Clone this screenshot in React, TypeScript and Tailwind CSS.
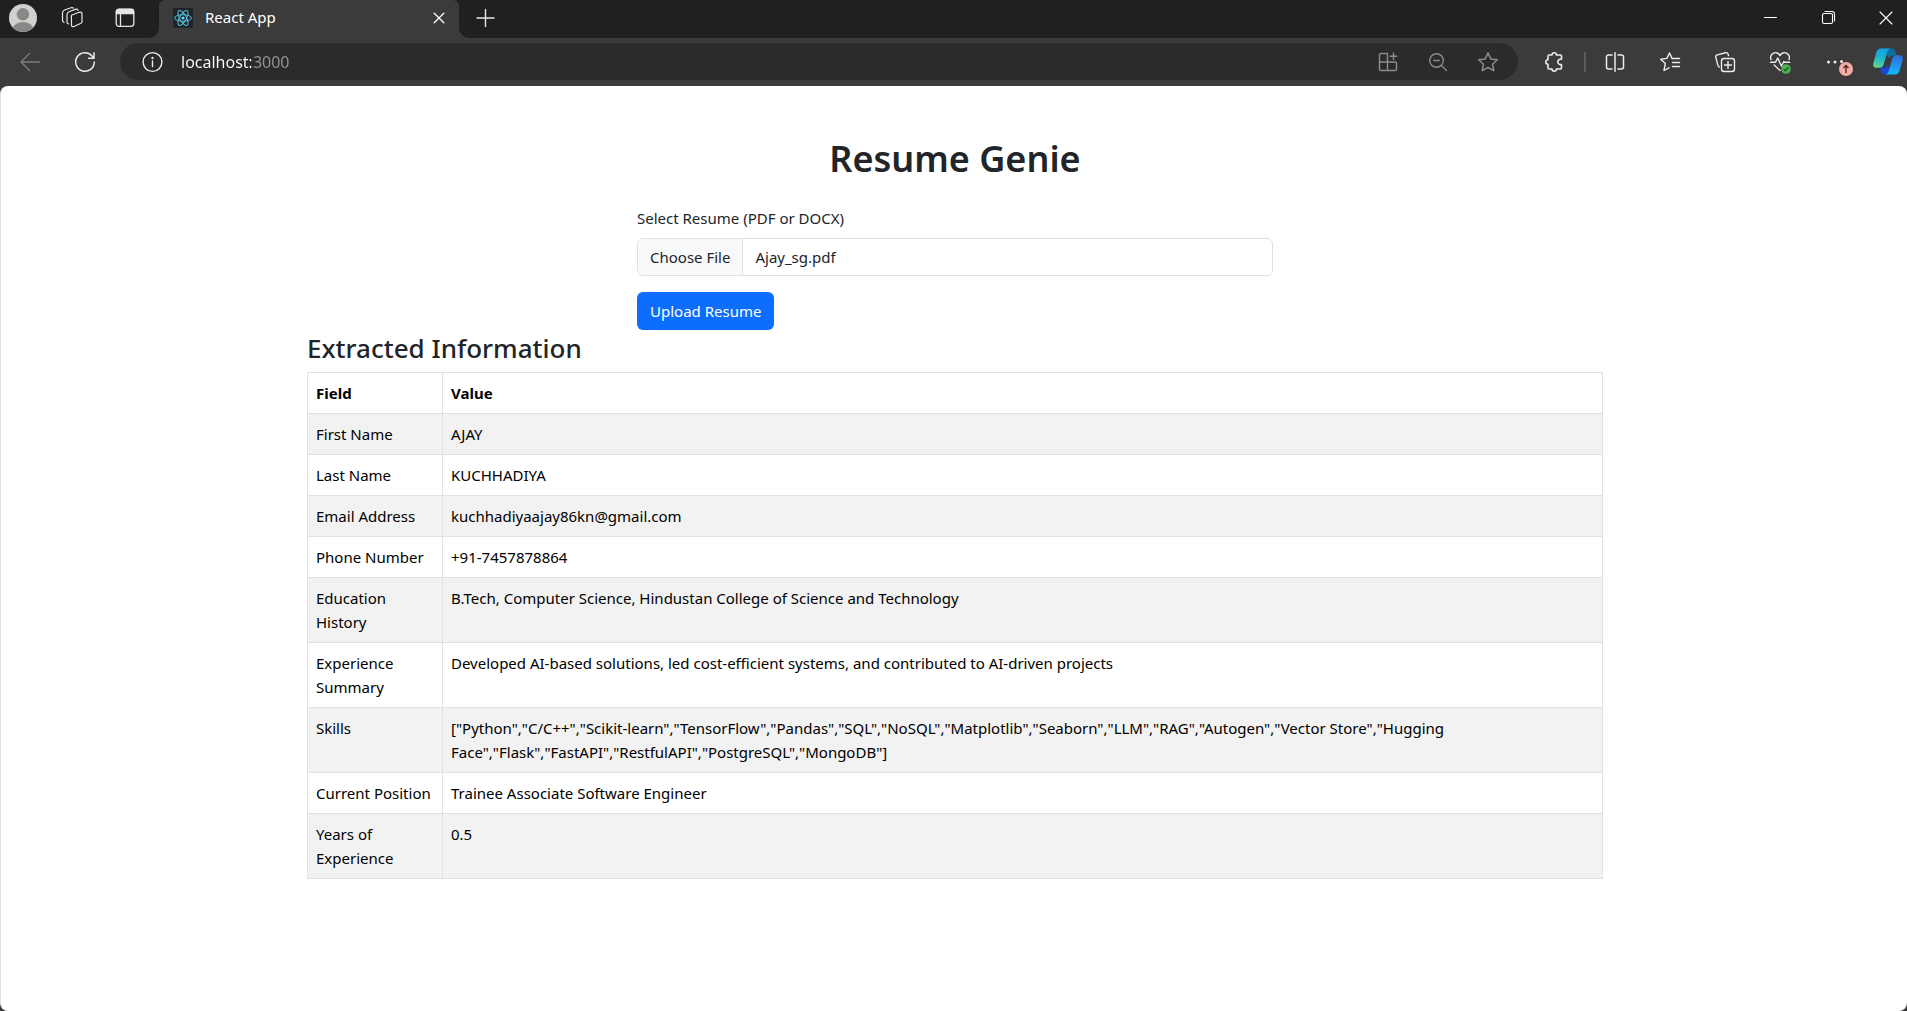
import React, { useState } from "react";

const rows: [string, string][] = [
  ["First Name", "AJAY"],
  ["Last Name", "KUCHHADIYA"],
  ["Email Address", "kuchhadiyaajay86kn@gmail.com"],
  ["Phone Number", "+91-7457878864"],
  ["Education History", "B.Tech, Computer Science, Hindustan College of Science and Technology"],
  ["Experience Summary", "Developed AI-based solutions, led cost-efficient systems, and contributed to AI-driven projects"],
  [
    "Skills",
    '["Python","C/C++","Scikit-learn","TensorFlow","Pandas","SQL","NoSQL","Matplotlib","Seaborn","LLM","RAG","Autogen","Vector Store","Hugging Face","Flask","FastAPI","RestfulAPI","PostgreSQL","MongoDB"]',
  ],
  ["Current Position", "Trainee Associate Software Engineer"],
  ["Years of Experience", "0.5"],
];

function Icon({ children, width = 1.3 }: { children: React.ReactNode; width?: number }) {
  return (
    <svg
      viewBox="0 0 20 20"
      className="block size-5 overflow-visible"
      fill="none"
      stroke="currentColor"
      strokeWidth={width}
      strokeLinecap="round"
      strokeLinejoin="round"
      aria-hidden="true"
    >
      {children}
    </svg>
  );
}

function IconButton({ label, className = "", children }: { label: string; className?: string; children: React.ReactNode }) {
  return (
    <button type="button" aria-label={label} className={`shrink-0 ${className}`}>
      {children}
    </button>
  );
}

function Avatar() {
  return (
    <svg viewBox="0 0 28 28" className="block size-7" aria-hidden="true">
      <clipPath id="avatar-clip">
        <circle cx="14" cy="14" r="14" />
      </clipPath>
      <g clipPath="url(#avatar-clip)">
        <rect width="28" height="28" fill="#d2d0ce" />
        <circle cx="14" cy="10.3" r="6.2" fill="#8a8886" />
        <ellipse cx="14" cy="26" rx="10.5" ry="8" fill="#8a8886" />
      </g>
    </svg>
  );
}

function ReactLogo() {
  return (
    <svg viewBox="0 0 20 20" className="block size-5" fill="none" stroke="#53c1de" strokeWidth="1" aria-hidden="true">
      <rect width="20" height="20" rx="2" fill="#20232a" stroke="none" />
      <ellipse cx="10" cy="10" rx="8.4" ry="3.3" />
      <ellipse cx="10" cy="10" rx="8.4" ry="3.3" transform="rotate(60 10 10)" />
      <ellipse cx="10" cy="10" rx="8.4" ry="3.3" transform="rotate(120 10 10)" />
      <circle cx="10" cy="10" r="1.6" fill="#61dafb" stroke="none" />
    </svg>
  );
}

function Copilot() {
  return (
    <svg viewBox="0 0 30 27" className="block h-[27px] w-[30px]" aria-hidden="true">
      <defs>
        <linearGradient id="cp-left" x1="0.6" y1="0" x2="0.3" y2="1">
          <stop offset="0" stopColor="#139fe2" />
          <stop offset="0.5" stopColor="#1fb4cf" />
          <stop offset="1" stopColor="#5fd98c" />
        </linearGradient>
        <linearGradient id="cp-right" x1="0.5" y1="0" x2="0.4" y2="1">
          <stop offset="0" stopColor="#2a6fe0" />
          <stop offset="0.5" stopColor="#2590ee" />
          <stop offset="1" stopColor="#14b8f5" />
        </linearGradient>
      </defs>
      <path d="M9 0.5h10c2.2 0 3 1.6 3.7 4l1 3h-4.2c-2 0-2.7 1-3.3 3z" fill="#0f6f9f" />
      <path d="M20.5 26.5h-9c-2.2 0-3-1.5-3.6-3.500l-1-3.2h3.6c2 0 3-.8 3.5-2.8z" fill="#1c46d8" />
      <path d="M8.5 0.5H17c-1.9 1-2.6 3-3.2 5l-3 10.5c-.8 2.6-2 3.8-4.5 3.8H3.5C.8 19.8-.3 18 .4 15L3.3 4.500C4.100 1.800 5.500.5 8.500.5Z" fill="url(#cp-left)" />
      <path d="M21.5 26.5H13c1.9-1 2.6-3 3.2-5l3-10.5c.8-2.6 2-3.8 4.500-3.8h2.8c2.700 0 3.800 1.800 3.100 4.800l-2.900 10.500c-.8 2.700-2.200 4-5.200 4Z" fill="url(#cp-right)" />
    </svg>
  );
}

function TabStrip() {
  return (
    <div className="flex h-[38px] items-center bg-[#202020] text-[#e6e6e6]">
      <div className="flex w-[149px] shrink-0 items-center pb-0.5 pl-[9px]">
        <IconButton label="Profile">
          <Avatar />
        </IconButton>
        <IconButton label="Workspaces" className="ml-[25px]">
          <Icon width={1.2}>
            <path d="M9.4 7.2 17 4.300Q20 3.600 20 6v7.500Q20 15 18.500 15.500l-6.500 3q-2.500.8-2.500-1.500Z" />
            <path d="M16 2.200Q15.500.8 13.500 1.400L7.500 3.500Q5 4.500 5 6.500V14q0 1.800 1.700 2" />
            <path d="M11.500.2Q10.500-.8 9-.3L2.500 2Q.5 3 .5 5v7.500q0 1.500 1.500 1.800" />
          </Icon>
        </IconButton>
        <IconButton label="Tab actions" className="ml-[33px]">
          <Icon>
            <rect x="1.2" y="1.2" width="17.6" height="17.2" rx="2.8" />
            <path d="M1.5 5.5V4a2.5 2.5 0 0 1 2.5-2.500h12A2.500 2.500 0 0 1 18.500 4v1.500Z" fill="currentColor" />
            <path d="M5.5 5.5v12.700" />
          </Icon>
        </IconButton>
      </div>
      <span className="size-2.5 shrink-0 self-end bg-[#3b3b3b]">
        <span className="block size-2.5 rounded-br-[10px] bg-[#202020]" />
      </span>
      <div className="flex h-full w-[300px] shrink-0 items-center rounded-t-md bg-[#3b3b3b] pr-2.5 pb-0.5 pl-3.5 text-white">
        <ReactLogo />
        <span className="ml-3 flex-1 pb-0.5 text-[15px] leading-5">React App</span>
        <IconButton label="Close tab">
          <Icon>
            <path d="m5.200 5.200 9.600 9.600M14.800 5.200l-9.600 9.600" />
          </Icon>
        </IconButton>
      </div>
      <span className="size-2.5 shrink-0 self-end bg-[#3b3b3b]">
        <span className="block size-2.5 rounded-bl-[10px] bg-[#202020]" />
      </span>
      <IconButton label="New tab" className="ml-1.5 pb-0.5">
        <Icon width={1.4}>
          <path d="M10.500 1.500v17M2 10h17" />
        </Icon>
      </IconButton>
      <div className="ml-auto flex gap-[38px] pr-[11px] pb-0.5 text-white">
        <IconButton label="Minimize">
          <Icon width={1}>
            <path d="M4.500 9.500h12" />
          </Icon>
        </IconButton>
        <IconButton label="Restore">
          <Icon width={1.1}>
            <rect x="4.500" y="5.500" width="10" height="10" rx="1.500" />
            <path d="M7 3.500h7a2.500 2.500 0 0 1 2.500 2.500v7" />
          </Icon>
        </IconButton>
        <IconButton label="Close window">
          <Icon width={1.1}>
            <path d="m4 4 12 12M16 4 4 16" />
          </Icon>
        </IconButton>
      </div>
    </div>
  );
}

function Toolbar() {
  return (
    <div className="flex h-12 items-center bg-[#3b3b3b] pr-1 pb-px pl-5 text-[#ececec]">
      <IconButton label="Back" className="text-[#7d7d7d]">
        <Icon>
          <path d="M19.500 10H1M9.500 1.500 1 10l8.500 8.500" />
        </Icon>
      </IconButton>
      <IconButton label="Refresh" className="ml-[35px]">
        <Icon width={1.5}>
          <path d="M19.300 10A9.300 9.300 0 1 1 17 3.900L18.800 6M19 .8V6.200H13.500" />
        </Icon>
      </IconButton>
      <div className="ml-[25px] flex h-[37px] flex-1 items-center rounded-full bg-[#2b2b2b] pr-5 pl-[22px]">
        <IconButton label="Site information">
          <Icon width={1.4}>
            <circle cx="10.500" cy="10" r="9.400" />
            <path d="M10.500 9v5.500" />
            <circle cx="10.500" cy="6" r=".5" fill="currentColor" />
          </Icon>
        </IconButton>
        <input
          aria-label="Address"
          defaultValue="localhost:3000"
          className="ml-[19px] min-w-0 flex-1 bg-[linear-gradient(90deg,#ffffff_70px,#949494_70px)] bg-clip-text text-base text-transparent outline-none"
        />
        <div className="flex gap-[30px] text-[#8c8c8c]">
          <IconButton label="Install app">
            <Icon width={1.4}>
              <path d="M9.500 1.500H3A1.500 1.500 0 0 0 1.500 3v14A1.500 1.500 0 0 0 3 18.500h14a1.500 1.500 0 0 0 1.500-1.500v-5.500A1.500 1.500 0 0 0 17 10H1.500M9.500 1.500v17M15.500 1v6.500M12.200 4.200h6.600" />
            </Icon>
          </IconButton>
          <IconButton label="Zoom">
            <Icon width={1.4}>
              <circle cx="8.500" cy="8.500" r="6.800" />
              <path d="m13.500 13.500 5 5M5.800 8.500h5.400" />
            </Icon>
          </IconButton>
          <IconButton label="Favorite this page">
            <Icon width={1.5}>
              <path d="m10 .9 2.800 6 6.500.8-4.800 4.500 1.300 6.500-5.800-3.200-5.800 3.200 1.300-6.500L.7 7.700l6.500-.8Z" />
            </Icon>
          </IconButton>
        </div>
      </div>
      <IconButton label="Extensions" className="ml-[26px]">
        <Icon width={1.6}>
          <path d="M5 3h3a2.200 2.200 0 0 1 4.400 0h4.100a1 1 0 0 1 1 1v3.200h-1a2.600 2.600 0 0 0 0 5.400h1v3.400a1 1 0 0 1-1 1h-4.100a2.200 2.200 0 0 1-4.400 0H5a1 1 0 0 1-1-1v-3.800a2.200 2.200 0 0 1 0-4.400V4a1 1 0 0 1 1-1Z" />
        </Icon>
      </IconButton>
      <span className="ml-5 h-5 w-0.5 bg-[#5c5c5c]" />
      <IconButton label="Split screen" className="ml-[19px]">
        <Icon width={1.5}>
          <path d="M10 .8v18.400M7 3H3.500A2 2 0 0 0 1.500 5v10a2 2 0 0 0 2 2H7M13 3h3.500a2 2 0 0 1 2 2v10a2 2 0 0 1-2 2H13" />
        </Icon>
      </IconButton>
      <IconButton label="Favorites" className="ml-[35px]">
        <Icon width={1.4}>
          <path d="m13.800 6.600-1.700-.2L9.500 1 6.900 6.400l-6.200.9 4.600 4.300-1.300 6.900 5-2.700M12 6.500h7.500M12.500 10.500h7M12.500 14.500h7" />
        </Icon>
      </IconButton>
      <IconButton label="Collections" className="ml-[35px]">
        <Icon width={1.4}>
          <rect x="6.500" y="6.500" width="13" height="13" rx="2.500" />
          <path d="M13 9.500v7M9.500 13h7M13.500 3.500l-.4-1.400Q12.500.200 10.500.700L2.300 2.900Q.3 3.500.8 5.400l2.100 8q.4 1.200 1.400 1.600" />
        </Icon>
      </IconButton>
      <IconButton label="Browser essentials" className="relative ml-[35px]">
        <Icon width={1.4}>
          <path d="M1 7.500A4.900 4.900 0 0 1 10 3.600a4.900 4.900 0 0 1 9 3.900M.5 10.200h5L7.700 6l3.700 8 2.400-4.500.6.700h5.300M4.200 13l5.800 5.600" />
        </Icon>
        <svg viewBox="0 0 10 10" className="absolute top-3 left-[11px] size-[10px]" aria-hidden="true">
          <circle cx="5" cy="5" r="4.800" fill="#4caf50" />
          <path d="m2.700 5.200 1.600 1.600 3.100-3.400" fill="none" stroke="#173d18" strokeWidth="1.1" />
        </svg>
      </IconButton>
      <IconButton label="Settings and more" className="relative ml-[35px]">
        <Icon>
          <g fill="currentColor" stroke="none">
            <circle cx="3.500" cy="10" r="1.500" />
            <circle cx="10" cy="10" r="1.500" />
            <circle cx="16.500" cy="9.500" r="1.500" />
          </g>
        </Icon>
        <svg viewBox="0 0 14 14" className="absolute top-2.5 left-3.5 size-3.5" aria-hidden="true">
          <circle cx="7" cy="7" r="7" fill="#f4aaa6" />
          <path d="M7 11V3.500M4.500 6 7 3.500 9.500 6" fill="none" stroke="#4a2322" strokeWidth="1.3" />
        </svg>
      </IconButton>
      <IconButton label="Copilot" className="ml-7">
        <Copilot />
      </IconButton>
    </div>
  );
}

function UploadForm() {
  const [fileName, setFileName] = useState("Ajay_sg.pdf");
  return (
    <form className="mx-auto w-full max-w-[636px] text-[15px] leading-6" onSubmit={(e) => e.preventDefault()}>
      <label htmlFor="resume" className="mb-2 block">
        Select Resume (PDF or DOCX)
      </label>
      <label
        htmlFor="resume"
        className="relative mb-4 flex h-[38px] overflow-hidden rounded-md border border-[#dee2e6] focus-within:border-[#86b7fe]"
      >
        <input
          id="resume"
          type="file"
          accept=".pdf,.docx"
          className="sr-only"
          onChange={(e) => setFileName(e.target.files?.[0]?.name ?? "No file chosen")}
        />
        <span className="border-r border-[#dee2e6] bg-[#f8f9fa] px-3 py-1.5">Choose File</span>
        <span className="px-3 py-1.5">{fileName}</span>
      </label>
      <button type="submit" className="block h-[38px] rounded-md bg-[#0d6efd] px-[13px] text-white">
        Upload Resume
      </button>
    </form>
  );
}

function ResultsTable() {
  return (
    <table className="w-full border-collapse text-left text-[15px] leading-6 text-black">
      <thead>
        <tr>
          <th scope="col" className="w-[135px] border border-[#dee2e6] p-2 font-bold">Field</th>
          <th scope="col" className="border border-[#dee2e6] p-2 font-bold">Value</th>
        </tr>
      </thead>
      <tbody>
        {rows.map(([field, value]) => (
          <tr key={field} className="align-top odd:bg-[#f2f2f2]">
            <td className="border border-[#dee2e6] p-2">{field}</td>
            <td className="border border-[#dee2e6] p-2">{value}</td>
          </tr>
        ))}
      </tbody>
    </table>
  );
}

export default function App() {
  return (
    <div className="flex min-h-screen flex-col bg-[#3b3b3b] font-['Noto_Sans','Open_Sans',sans-serif]">
      <header>
        <TabStrip />
        <Toolbar />
      </header>
      <main className="flex-1 rounded-lg border-l border-[#e2e2e2] bg-white py-12 pl-0.5 text-[#212529]">
        <div className="mx-auto w-full max-w-[1320px] px-3">
          <h1 className="mb-[22px] text-center text-[36px] leading-[50px] font-semibold">Resume Genie</h1>
          <UploadForm />
          <h2 className="mb-1.5 text-[26px] leading-9 font-medium">Extracted Information</h2>
          <ResultsTable />
        </div>
      </main>
    </div>
  );
}
